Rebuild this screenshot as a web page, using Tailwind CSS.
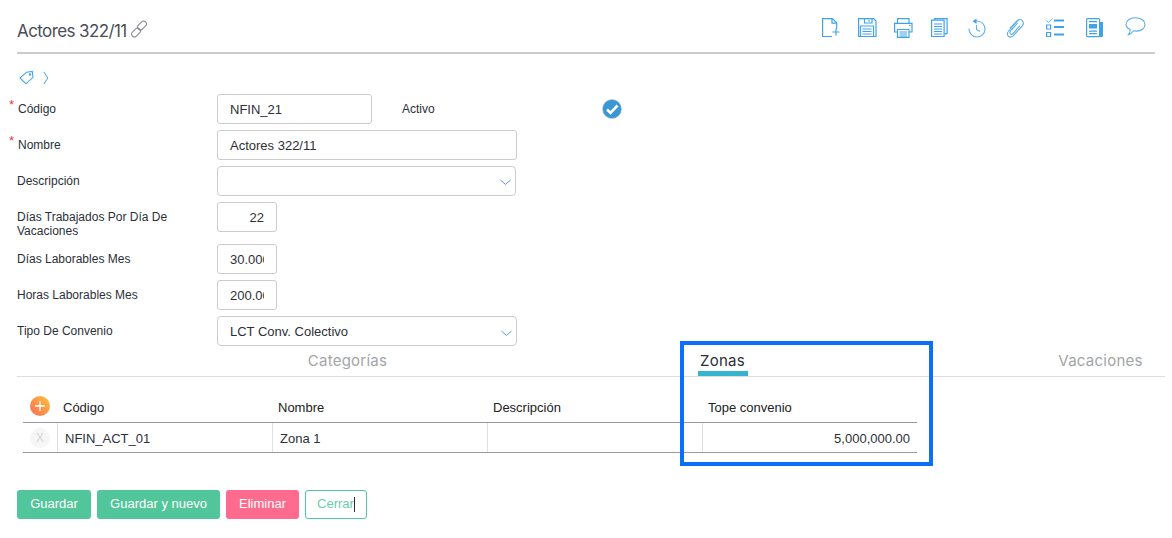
<!DOCTYPE html>
<html lang="es">
<head>
<meta charset="utf-8">
<script src="https://cdn.jsdelivr.net/npm/@tailwindcss/browser@4"></script>
<title>Actores</title>
</head>
<body class="bg-white font-['Liberation_Sans',sans-serif] text-[#2b2f38]">
<div class="relative w-[1172px] h-[538px] overflow-hidden">
  <!-- header -->
  <header class="mx-[17px] h-[36px] mt-4 border-b-2 border-[#cccccc] flex justify-between items-start box-content">
    <div class="flex items-start h-full">
      <h1 class="font-['Inter',sans-serif] text-[17px] leading-[30px] text-[#4a4d55] tracking-[-0.6px]">Actores 322/11</h1>
      <svg class="ml-[3px] mt-[4px] text-[#85888e]" width="18" height="18" viewBox="0 0 18 18" fill="none" stroke="currentColor" stroke-width="1"><rect x="1" y="9.700" width="10" height="5.600" rx="2.800" transform="rotate(-45 6 12.500)"/><rect x="7" y="2.700" width="10" height="5.600" rx="2.800" transform="rotate(-45 12 5.500)"/></svg>
    </div>
    <div class="flex items-start text-[#3fa3ea] pr-[9px] mt-[2px]">
      <!-- new file -->
      <svg width="20" height="20" viewBox="0 0 20 20" fill="none" stroke="currentColor" stroke-width="1.200"><path d="M10 18.500H.6V.6h9.900l4.200 4.200V11"/><path d="M10 .6v4.500h4.700"/><path d="M14 10.500v7M10.500 14h7"/></svg>
      <!-- save -->
      <svg class="ml-[16px]" width="19" height="20" viewBox="0 0 19 20" fill="none" stroke="currentColor" stroke-width="1.200"><path d="M.6.6h15l2.400 2.400v15.500H.6z"/><path d="M6.500.6v4.400h7.500V.6"/><path d="M11 1.800v2" /><path d="M2.500 18.500V8h13v10.500"/><path d="M4.500 11h9M4.500 13.500h9M4.500 16h9"/></svg>
      <!-- print -->
      <svg class="ml-[17px]" width="19" height="20" viewBox="0 0 19 20" fill="none" stroke="currentColor" stroke-width="1.200"><path d="M3.500 5V.6h11.500V5"/><path d="M3.500 14H.6V5.300h17.400V14h-3"/><path d="M3.500 11.500h11.500v7.900H3.500z"/><path d="M5.500 14h7.500M5.500 16h7.500M5.500 18h7.500"/><path d="M15 7.500h1.500"/></svg>
      <!-- docs -->
      <svg class="ml-[18px]" width="17" height="20" viewBox="0 0 17 20" fill="none" stroke="currentColor" stroke-width="1.200"><path d="M3.500 2V.6h12.600v15h-2.500"/><path d="M.6 2.200h12.500v16.300H.6z"/><path d="M3 6h8M3 8.500h8M3 11h8M3 13.500h8M3 16h8"/></svg>
      <!-- history -->
      <svg class="ml-[19px]" width="19" height="20" viewBox="0 0 19 20" fill="none" stroke="#64b2ea" stroke-width="1.100"><path d="M9 3h1a8 8 0 1 1-8 7.500"/><path d="M9.500 7v4.500l3.500 2"/><path d="M5.500 3.200 9.500.5v5.500z" fill="#3fa3ea" stroke="none"/></svg>
      <!-- clip -->
      <svg class="ml-[20px]" width="18" height="20" viewBox="0 0 18 20" fill="none" stroke="#5aaee8" stroke-width="1.100"><path d="M12.500 2 3 12.500c-2.500 2.700-1.800 4.800-.5 5.800 1.400 1.100 3.300.9 5-1L16 8.500c1.800-2.200 1.500-4.500.2-5.800-1.500-1.600-3.200-1.600-5-.1L3.800 10.500"/><path d="M11.600 5 4.800 12.600c-1.300 1.500-1 2.800-.3 3.300.8.600 1.800.4 2.700-.6l6.800-7.600"/></svg>
      <!-- checklist -->
      <svg class="ml-[22px]" width="19" height="20" viewBox="0 0 19 20" fill="none" stroke="currentColor" stroke-width="1.200"><path d="M.5 2.500 2.500 4.300 6.500.4" stroke="#64b2ea" stroke-width="1"/><path d="M8 2.500h10M8 9h10M8 16.500h10" stroke-width="2"/><path d="M.6 7h4v4h-4zM.6 14.500h4v4h-4z"/></svg>
      <!-- news -->
      <svg class="ml-[21px]" width="17" height="20" viewBox="0 0 17 20" fill="currentColor"><path d="M13 4h4v14a1 1 0 0 1-1 1h-3z"/><rect x=".6" y=".6" width="13" height="18" rx="1" fill="#fff" stroke="currentColor" stroke-width="1.200"/><path d="M3 3h8v1.200H3zM3 6h8v4.500H3zM3 12.500h8v1.200H3zM3 15h8v1.200H3z"/></svg>
      <!-- comment -->
      <svg class="ml-[22px] -mt-[1px]" width="21" height="20" viewBox="0 0 21 20" fill="none" stroke="#5aaee8" stroke-width="1.100"><path d="M10.500.7c5 0 9.500 2.700 9.500 6.900 0 3.800-3.800 6.500-8.500 6.500-1.200 0-2-.1-3-.3-1.300 1.800-3 3.200-5 4 1-1.600 1.700-3.200 1.700-5.200C2.600 11.500 1 9.700 1 7.600 1 3.400 5.500.7 10.500.7z"/></svg>
    </div>
  </header>

  <!-- breadcrumb -->
  <div class="ml-[19px] mt-[15px] h-[17px] flex items-center gap-[9px]">
    <svg width="15" height="15" viewBox="0 0 15 15" fill="none" stroke="#45a5ee" stroke-width="1.100"><path d="M1 8 7.500 2.200l5.800-.8.700 6L7 13.800z"/><circle cx="11" cy="4.500" r=".7" /></svg>
    <svg width="6" height="14" viewBox="0 0 6 14" fill="none" stroke="#45a5ee" stroke-width="1"><path d="M.8.8 4.800 7 .8 13.200"/></svg>
  </div>

  <!-- form -->
  <form class="mt-[8px] ml-[17px] flex flex-col gap-[6px] text-[12px] leading-[14px]">
    <div class="flex items-center h-[30px]">
      <label class="relative w-[200px]"><span class="absolute -left-[8px] -top-[4px] text-[#e0424f] text-[13px]">*</span><span class="ml-[1px]">Código</span></label>
      <div class="w-[155px] h-[30px] border border-[#cccccc] rounded-[3px] px-3 text-[13px] leading-[29px]">NFIN_21</div>
      <span class="ml-[30px] w-[200px]">Activo</span>
      <svg width="20" height="20" viewBox="0 0 20 20"><circle cx="10" cy="10" r="9.500" fill="#3a97d4" stroke="#b8c4cc" stroke-width=".6"/><path d="M5 10.500 8.500 14 15.500 6.500" fill="none" stroke="#fff" stroke-width="2.600"/></svg>
    </div>
    <div class="flex items-center h-[30px]">
      <label class="relative w-[200px]"><span class="absolute -left-[8px] -top-[4px] text-[#e0424f] text-[13px]">*</span><span class="ml-[1px]">Nombre</span></label>
      <div class="w-[300px] h-[30px] border border-[#cccccc] rounded-[3px] px-3 text-[13px] leading-[29px]">Actores 322/11</div>
    </div>
    <div class="flex items-center h-[30px]">
      <label class="w-[200px]">Descripción</label>
      <div class="relative w-[299px] h-[30px] border border-[#cccccc] rounded-[4px]">
        <svg class="absolute right-[4px] top-[12px]" width="11" height="7" viewBox="0 0 11 7" fill="none" stroke="#5b9bd8"><path d="M.5 1 5.500 5.500 10.500 1"/></svg>
      </div>
    </div>
    <div class="flex items-start h-[36px]">
      <label class="w-[200px] pt-[8px]">Días Trabajados Por Día De<br>Vacaciones</label>
      <div class="w-[60px] h-[30px] border border-[#cccccc] rounded-[3px] px-3 text-right text-[13px] leading-[29px]">22</div>
    </div>
    <div class="flex items-center h-[30px]">
      <label class="w-[200px]">Días Laborables Mes</label>
      <input readonly value="30.000" class="w-[60px] h-[30px] border border-[#cccccc] rounded-[3px] px-3 text-[13px] text-[#2b2f38]">
    </div>
    <div class="flex items-center h-[30px]">
      <label class="w-[200px]">Horas Laborables Mes</label>
      <input readonly value="200.00" class="w-[60px] h-[30px] border border-[#cccccc] rounded-[3px] px-3 text-[13px] text-[#2b2f38]">
    </div>
    <div class="flex items-center h-[30px]">
      <label class="w-[200px]">Tipo De Convenio</label>
      <div class="relative w-[300px] h-[30px] border border-[#cccccc] rounded-[4px] px-3 text-[13px] leading-[29px]">LCT Conv. Colectivo
        <svg class="absolute right-[4px] top-[13px]" width="11" height="7" viewBox="0 0 11 7" fill="none" stroke="#5b9bd8"><path d="M.5 1 5.500 5.500 10.500 1"/></svg>
      </div>
    </div>
  </form>

  <!-- tabs -->
  <div class="mx-[17px] mt-[4px] w-[1148px] h-[27px] border-b border-[#dddddd] flex pl-[143px] font-['Inter',sans-serif] text-[15px] leading-[22px] text-[#a3a5a8] tracking-[0.25px]">
    <div class="w-[375px] shrink-0 flex justify-center">Categorías</div>
    <div class="w-[375px] shrink-0 flex justify-center"><span class="relative h-[26px] w-[50px] text-center text-[#2b2f38] tracking-[0.3px]">Zonas<span class="absolute left-0 right-0 top-[21px] h-[5px] bg-[#36b3cf]"></span></span></div>
    <div class="ml-[148px] w-[85px] shrink-0 flex justify-center">Vacaciones</div>
  </div>

  <!-- table -->
  <div class="ml-[23px] mt-[18px] w-[894px] text-[13px]">
    <div class="flex h-[28px] border-b border-[#999999] leading-[25px] text-[#222222]">
      <div class="w-[34px] pl-[7px] pt-[1px]"><span class="flex w-[20px] h-[20px] rounded-full bg-[linear-gradient(to_bottom_left,#fcc43a,#fa6a5a)] items-center justify-center"><svg width="10" height="10" viewBox="0 0 10 10" stroke="#fff" stroke-width="1.300"><path d="M5 0v10M0 5h10"/></svg></span></div>
      <div class="w-[215px] pl-[6px]">Código</div>
      <div class="w-[215px] pl-[6px]">Nombre</div>
      <div class="w-[215px] pl-[6px]">Descripción</div>
      <div class="w-[215px] pl-[6px]">Tope convenio</div>
    </div>
    <div class="flex h-[30px] border-b border-[#999999] leading-[31px]">
      <div class="w-[34px] pl-[7px] pt-[5px]"><span class="flex w-[20px] h-[20px] rounded-full bg-[#f6f6f6] text-[#d4d4d4] text-[12px] items-center justify-center">X</span></div>
      <div class="w-[215px] pl-[7px] border-l border-[#e0e0e0]">NFIN_ACT_01</div>
      <div class="w-[215px] pl-[7px] border-l border-[#e0e0e0]">Zona 1</div>
      <div class="w-[215px] border-l border-[#e0e0e0]"></div>
      <div class="w-[215px] pr-[7px] text-right border-l border-[#e0e0e0]">5,000,000.00</div>
    </div>
  </div>

  <!-- buttons -->
  <div class="ml-[17px] mt-[37px] flex gap-[6px] text-[13px] leading-[28px]">
    <button class="w-[74px] h-[29px] pb-[1px] rounded-[3px] bg-[#52c69b] text-white">Guardar</button>
    <button class="w-[123px] h-[29px] pb-[1px] rounded-[3px] bg-[#52c69b] text-white">Guardar y nuevo</button>
    <button class="w-[73px] h-[29px] pb-[1px] rounded-[3px] bg-[#ff6b8f] text-white">Eliminar</button>
    <button class="w-[62px] h-[29px] pb-[1px] rounded-[3px] border border-[#52c69b] text-[#6ccda9] leading-[26px]">Cerrar<span class="inline-block w-px h-[15px] bg-[#2b2f38] align-middle"></span></button>
  </div>

  <!-- highlight -->
  <div class="absolute left-[680px] top-[341px] w-[253px] h-[125px] border-4 border-[#0d6efd] pointer-events-none"></div>
</div>
</body>
</html>
